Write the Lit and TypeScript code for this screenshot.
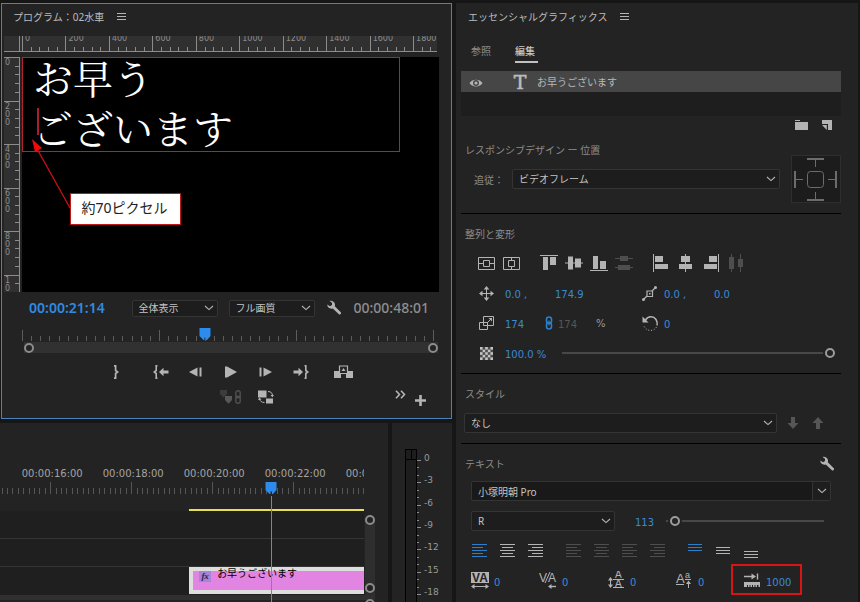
import { LitElement, html, css, svg, nothing, type TemplateResult } from "lit";
import { customElement, property } from "lit/decorators.js";

const range = (n: number) => Array.from({ length: n }, (_, i) => i);

/* Inline icon drawn in its own pixel box */
const icon = (w: number, h: number, body: unknown) =>
  html`<svg class="icon" width=${w} height=${h} viewBox="0 0 ${w} ${h}" aria-hidden="true">${body}</svg>`;

const chevron = () =>
  html`<svg class="chevron" width="10" height="6" viewBox="0 0 10 6" aria-hidden="true">
    <path d="M1 1 L5 4.6 L9 1" fill="none" stroke="#b4b4b4" stroke-width="1.1" />
  </svg>`;

const menuIcon = () =>
  icon(9, 9, svg`<path d="M0 1.5H9M0 4.5H9M0 7.5H9" stroke="#b4b4b4" />`);

const wrench = () =>
  icon(16, 16, svg`<path fill="#b4b4b4" d="M1.2 4.6 L4 6.2 L6 5 L6 2.8 L3.6 1 C6 0.4 8.6 1.8 9 4.2 C9.1 5 9 5.6 8.8 6.2 L15 12.4 C15.4 13.4 14.2 14.8 13.2 14.6 L6.8 8.4 C4.2 9.4 1.2 7.6 1.2 4.6 Z" />`);

const shared = css`
  * { box-sizing: border-box; }
  .icon { display: block; flex: none; }
  button, select, input { font: inherit; color: inherit; margin: 0; }
  button {
    background: none; border: 0; padding: 0;
    display: flex; align-items: center; justify-content: center;
  }
  .panel-title {
    display: flex; align-items: center; gap: 13px;
    margin: 0; font-size: 10px; font-weight: 400; color: #bcbcbc;
  }
  .drop { position: relative; display: block; min-width: 0; }
  .drop select {
    appearance: none; width: 100%; height: 20px; padding: 0 20px 0 6px;
    background: #1d1d1d; border: 1px solid #343434; border-radius: 2px;
    color: #c4c4c4; font-size: 10px; line-height: 16px; display: block;
  }
  .drop .chevron { position: absolute; right: 4px; top: calc(50% - 3px); pointer-events: none; }
  .sr { position: absolute; width: 1px; height: 1px; overflow: hidden; clip-path: inset(50%); }
`;

/* ---------------------------------------------------------------- program */

@customElement("program-monitor")
export class ProgramMonitor extends LitElement {
  static styles = [
    shared,
    css`
      :host { display: block; background: #232323; border: 1px solid #4a82bb; margin-left: 1px; padding-bottom: 9px; }
      .panel-title { height: 32px; padding: 0 11px 7px; }
      .stage {
        display: grid; grid-template-columns: 18px minmax(0, 1fr); grid-template-rows: 21px auto;
        margin: 0 12px 0 2px;
      }
      .corner { width: 16px; height: 16px; background: #303030; border-bottom: 1px solid #8c8c8c; border-right: 1px solid #8c8c8c; }
      .corner-wrap { background: linear-gradient(#303030 0 15px, #8c8c8c 15px 16px, transparent 16px); }
      .ruler-x { display: block; width: 100%; height: 16px; padding-right: 2px; }
      .ruler-x svg { display: block; width: 100%; height: 16px; background: #303030; border-bottom: 1px solid #8c8c8c; overflow: hidden; }
      .ruler-y { display: flex; flex-direction: column; width: 16px; background: #303030; border-right: 1px solid #8c8c8c; }
      .ruler-y svg { flex: 1; width: 15px; height: 0; min-height: 0; display: block; overflow: hidden; }
      .tick { stroke: #8c8c8c; shape-rendering: crispEdges; }
      .num { fill: #8c8c8c; font: 8px "DejaVu Sans", sans-serif; }
      .video { position: relative; aspect-ratio: 417 / 235; background: #000; overflow: hidden; }
      .caption {
        position: absolute; left: 0; top: 0; width: 378px; max-width: 91%; height: 95px;
        border: 1px solid #b3242a; color: #fff; margin: 0; padding: 0 0 0 10px; overflow: hidden;
        font: 400 40px/50px "Kozuka Mincho Pro", "Noto Serif CJK JP", "Noto Sans CJK JP", serif;
        white-space: pre;
      }
      .caption span { display: block; margin-top: -6px; }
      .note-lines { position: absolute; left: 0; top: 0; width: 60px; height: 170px; }
      .note {
        position: absolute; left: 48px; top: 136px; height: 32px; width: 111px;
        background: #fff; border: 1px solid #c01818; color: #222;
        font-size: 14px; line-height: 27px; text-align: center; margin: 0; padding-right: 2px; white-space: nowrap;
      }
      .info { display: flex; align-items: center; height: 32px; padding: 0 22px 0 27px; }
      .time { font-size: 14px; font-weight: 600; line-height: 20px; white-space: nowrap; }
      .now { color: #2f8be0; flex: 1; }
      .total { color: #8e8e8e; font-weight: 500; margin-left: 12px; }
      .info .drop { width: 86px; margin-right: 11px; }
      .info .drop select { height: 17px; line-height: 13px; }
      .scrub { position: relative; margin: 6px 18px 0 20px; height: 12px; }
      .scrub svg.marks { display: block; width: 100%; height: 11px; overflow: visible; }
      .head { position: absolute; top: -2px; margin-left: -6px; }
      .zoombar { display: flex; justify-content: space-between; align-items: center; height: 11px; margin: 0 13px 0 22px; background: #313132; }
      .knob { width: 10px; height: 10px; border: 2px solid #8c8c8c; border-radius: 50%; background: #232323; }
      .transport { display: flex; height: 26px; margin: 6px 0 0 96px; }
      .transport button { width: 35px; height: 26px; }
      .transport .first { margin-right: 10px; }
      .transport .last { margin-left: 8px; }
      .extras { display: flex; height: 24px; padding: 0 25px 0 216px; gap: 8px; }
      .extras button { width: 26px; height: 24px; }
      .extras .more { width: 12px; margin-left: auto; padding-bottom: 6px; }
      .extras .add { width: 12px; padding-top: 6px; }
    `,
  ];

  private rulerX() {
    return html`<div class="ruler-x"><svg aria-hidden="true">
      ${range(49).map((i) => svg`<line class="tick" x1=${(i * 4000) / 1910 + "%"} x2=${(i * 4000) / 1910 + "%"}
        y1=${i % 5 ? 11 : 0} y2="16" transform="translate(.5 0)" />`)}
      ${range(10).map((i) => svg`<text class="num" x=${(i * 20000) / 1910 + "%"} y="5" dx="3">${i * 200}</text>`)}
    </svg></div>`;
  }

  private rulerY() {
    return html`<div class="ruler-y"><svg aria-hidden="true">
      ${range(28).map((i) => svg`<line class="tick" y1=${(i * 4000) / 1080 + "%"} y2=${(i * 4000) / 1080 + "%"}
        x1=${i % 5 ? 11 : 0} x2="16" transform="translate(0 .5)" />`)}
      ${range(6).map((i) => String(i * 200).split("").map((d, k) => svg`<text class="num" x="1"
        y=${(i * 20000) / 1080 + "%"} dy=${8 + k * 8}>${d}</text>`))}
    </svg></div>`;
  }

  render() {
    const c = "#b4b4b4";
    const headAt = 44.6;
    return html`
      <h2 class="panel-title">プログラム：02水車 ${menuIcon()}</h2>
      <div class="stage">
        <div class="corner-wrap"><div class="corner"></div></div>
        ${this.rulerX()}
        ${this.rulerY()}
        <div class="video">
          <p class="caption"><span>お早う
ございます</span></p>
          <svg class="note-lines" viewBox="0 0 60 170" aria-hidden="true">
            <path d="M16 51V78" stroke="#a8202a" stroke-width="2" />
            <path d="M48 151L14 90" stroke="#c81010" stroke-width="1.4" />
            <path d="M10 82L20 91L13 95Z" fill="#f40808" />
          </svg>
          <p class="note">約70ピクセル</p>
        </div>
      </div>

      <div class="info">
        <span class="time now">00:00:21:14</span>
        <label class="drop"><span class="sr">表示倍率</span>
          <select><option>全体表示</option></select>${chevron()}</label>
        <label class="drop"><span class="sr">再生時の解像度</span>
          <select><option>フル画質</option></select>${chevron()}</label>
        <button aria-label="設定">${wrench()}</button>
        <span class="time total">00:00:48:01</span>
      </div>

      <div class="scrub">
        <svg class="marks" aria-hidden="true">
          ${range(46).map((i) => svg`<line x1=${(i * 100) / 45 + "%"} x2=${(i * 100) / 45 + "%"}
            y1=${i % 15 ? 6 : 0} y2="11" stroke="#5c5c5c" shape-rendering="crispEdges" transform="translate(.5 0)" />`)}
        </svg>
        <div class="head" style="left:${headAt}%">
          ${icon(12, 12, svg`<path d="M.5 0H11.500V8L8 12H7V9.500H5.500V12H4.500L.5 8Z" fill="#2d8ceb" />`)}
        </div>
      </div>
      <div class="zoombar"><span class="knob"></span><span class="knob"></span></div>

      <div class="transport">
        <button class="first" aria-label="アウトをマーク">
          ${icon(6, 14, svg`<path d="M1 .8H2.600V5.500L4.600 7L2.600 8.500V13.200H1" fill="none" stroke=${c} stroke-width="1.700" />`)}
        </button>
        <button aria-label="インへ移動">
          ${icon(16, 14, svg`<path d="M4.500 .8H3.200V5.500L1.200 7L3.200 8.500V13.200H4.500" fill="none" stroke=${c} stroke-width="1.600" />
            <path d="M6 7L10.500 2.800V5.600H15.500V8.400H10.500V11.200Z" fill=${c} />`)}
        </button>
        <button aria-label="前のフレーム">
          ${icon(13, 10, svg`<path d="M0 5L8.500 .5V9.500ZM10.500 .5H12.500V9.500H10.500Z" fill=${c} />`)}
        </button>
        <button aria-label="再生">
          ${icon(12, 12, svg`<path d="M0 .5H2L12 6L2 11.500H0Z" fill=${c} />`)}
        </button>
        <button aria-label="次のフレーム">
          ${icon(13, 10, svg`<path d="M13 5L4.500 .5V9.500ZM.5 .5H2.500V9.500H.5Z" fill=${c} />`)}
        </button>
        <button aria-label="アウトへ移動">
          ${icon(16, 14, svg`<path d="M11.500 .8H12.800V5.500L14.800 7L12.800 8.500V13.200H11.500" fill="none" stroke=${c} stroke-width="1.600" />
            <path d="M10 7L5.500 2.800V5.600H.5V8.400H5.500V11.200Z" fill=${c} />`)}
        </button>
        <button class="last" aria-label="リフト">
          ${icon(19, 14, svg`<path d="M0 6H7V13H0ZM12 6H19V13H12Z" fill=${c} />
            <path d="M5.500 1H13.500V8.500H5.500Z" fill="#232323" stroke=${c} stroke-width="1.200" />
            <path d="M7.500 6L9.500 3L11.500 6Z" fill=${c} />`)}
        </button>
      </div>

      <div class="extras">
        <button disabled aria-label="リンクされたマーカー">
          ${icon(22, 14, svg`<path d="M0 0H7V4L3.500 7.500L0 4Z" fill="#3c3c3c" /><path d="M5 6H12V10L8.500 13.800L5 10Z" fill="#585858" />
            <rect x="15.800" y=".8" width="4.400" height="7" rx="2.200" fill="none" stroke="#505050" stroke-width="1.400" />
            <rect x="15.800" y="6.200" width="4.400" height="7" rx="2.200" fill="none" stroke="#505050" stroke-width="1.400" />`)}
        </button>
        <button aria-label="プロキシの切り替え">
          ${icon(17, 14, svg`<path d="M1 .5H9.500V7.500H1ZM9 8.500H16V13.500H9Z" fill=${c} />
            <path d="M11 1.500C14 1.500 15.500 3 15.500 6M7.500 12.500C4.500 12.500 3 11 2.500 9" fill="none" stroke=${c} />
            <path d="M13.500 5H17L15.300 7.200ZM.8 9.800L2.500 7.500L4.500 9.800Z" fill=${c} />`)}
        </button>
        <button class="more" aria-label="その他">
          ${icon(11, 9, svg`<path d="M1 .7L4.500 4.500L1 8.300M6 .7L9.500 4.500L6 8.300" fill="none" stroke=${c} stroke-width="1.600" />`)}
        </button>
        <button class="add" aria-label="ボタンエディター">
          ${icon(11, 11, svg`<path d="M5.500 0V11M0 5.500H11" stroke=${c} stroke-width="2.600" />`)}
        </button>
      </div>
    `;
  }
}

/* --------------------------------------------------------------- timeline */

@customElement("timeline-panel")
export class TimelinePanel extends LitElement {
  static styles = [
    shared,
    css`
      :host {
        display: grid; grid-template-columns: minmax(0, 1fr) 10px; column-gap: 1px;
        padding-right: 13px; background: #232323; overflow: hidden;
      }
      .lanes { position: relative; }
      .scale { display: block; width: 100%; height: 86px; overflow: hidden; }
      .scale text { font: 10px "DejaVu Sans", sans-serif; fill: #a4a4a4; text-anchor: middle; }
      .track { height: 28px; background: #1f1f1f; border-bottom: 1px solid #353535; }
      .yellow { height: 2px; background: #e4de58; }
      .track.clip-track { border: 0; }
      .clip {
        display: flex; align-items: flex-start; gap: 6px; height: 27px; padding: 0 0 0 6px;
        border: 4px solid #dedede; border-right: 0; background: #e284e2; color: #000;
        font-size: 10px; line-height: 12px; white-space: nowrap;
      }
      .clip .fx {
        width: 12px; height: 11px; background: #a585d6; color: #2c2058; text-align: center;
        font: italic 700 9px/10px "Liberation Serif", serif;
      }
      .clip .name { margin-top: -4px; }
      .play { position: absolute; top: 59px; bottom: -12px; width: 12px; margin-left: -6px; display: flex; flex-direction: column; align-items: center; }
      .play::after { content: ""; width: 1px; flex: 1; background: #3f95e6; margin-top: 2px; }
      .bar { grid-column: 1 / -1; height: 5px; background: #303030; margin-bottom: 2px; }
      .vscroll { display: flex; flex-direction: column; justify-content: space-between; align-items: center; background: #2e2e2e; margin-top: 92px; padding: 0 0 2px; border-radius: 5px 5px 0 0; }
      .knob { width: 10px; height: 10px; border: 2px solid #8c8c8c; border-radius: 50%; background: #232323; }
      .foot { grid-column: 1 / -1; height: 12px; border-top: 1px solid #161616; display: flex; justify-content: flex-end; }
      .foot .knob { margin-top: -4px; }
    `,
  ];

  private pos(seconds: number) {
    return 13.8 + ((seconds - 16) / 2) * 22.25;
  }

  render() {
    const start = this.pos(19.43);
    return html`
      <div class="lanes">
        <svg class="scale" aria-hidden="true">
          ${range(75).map((i) => {
            const x = this.pos(14) + (i * 22.25) / 15 + "%";
            return svg`<line x1=${x} x2=${x} y1=${i % 15 ? 65 : 59} y2="71" stroke="#565656" shape-rendering="crispEdges" transform="translate(.5 0)" />`;
          })}
          ${[16, 18, 20, 22, 24].map((t) => svg`<text x=${this.pos(t) + "%"} dx="2" y="54">00:00:${t}:00</text>`)}
        </svg>
        <div class="yellow" style="margin-left:${start}%"></div>
        <div class="track"></div>
        <div class="track"></div>
        <div class="track clip-track">
          <div class="clip" style="margin-left:${start}%">
            <span class="fx">fx</span><span class="name">お早うございます</span>
          </div>
        </div>
        <div class="play" style="left:${this.pos(21.46)}%">
          ${icon(12, 12, svg`<path d="M.5 0H11.500V8L8 12H7V9.500H5.500V12H4.500L.5 8Z" fill="#2d8ceb" />`)}
        </div>
      </div>
      <div class="vscroll"><span class="knob"></span><span class="knob"></span></div>
      <div class="bar"></div>
      <div class="foot"><span class="knob"></span></div>
    `;
  }
}

@customElement("audio-meter")
export class AudioMeter extends LitElement {
  static styles = [
    shared,
    css`
      :host { display: flex; background: #232323; padding: 26px 0 0 13px; overflow: hidden; }
      .well { width: 13px; border: 1px solid #000; border-bottom: 0; background: #1d1d1d; }
      .peak { height: 10px; border-bottom: 1px solid #000; background: linear-gradient(90deg, transparent 5px, #000 5px 6px, transparent 6px); }
      svg { display: block; width: 40px; height: 160px; }
      text { font: 9px "DejaVu Sans", sans-serif; fill: #9a9a9a; }
    `,
  ];

  render() {
    return html`
      <div class="well"><div class="peak"></div></div>
      <svg aria-hidden="true">
        ${range(20).map((i) => svg`<path d="M0 ${Math.round(11 + i * 7.45) + 0.5}H${i % 3 ? 2 : 4}" stroke="#8c8c8c" />`)}
        ${range(7).map((i) => svg`<text x="7" y=${Math.round(12 + i * 22.35)}>${i ? -3 * i : 0}</text>`)}
      </svg>
    `;
  }
}

/* ----------------------------------------------------- essential graphics */

@customElement("scrub-value")
export class ScrubValue extends LitElement {
  @property() value = "";
  @property() label = "";
  @property({ type: Boolean }) dim = false;

  static styles = [
    shared,
    css`
      :host { display: block; min-width: 0; }
      input {
        display: block; width: 100%; height: 20px; padding: 2px 0 0; border: 0; background: none;
        color: #3a8ad6; font: 10px/18px "DejaVu Sans", sans-serif; outline: none;
      }
      .dim { color: #565656; }
    `,
  ];

  render() {
    return html`<input class=${this.dim ? "dim" : "live"} .value=${this.value} aria-label=${this.label} ?disabled=${this.dim} />`;
  }
}

@customElement("essential-graphics")
export class EssentialGraphics extends LitElement {
  static styles = [
    shared,
    css`
      :host { display: block; background: #232323; padding: 0 17px 0 5px; overflow: hidden; }
      .panel-title { height: 28px; padding: 0 0 1px 7px; gap: 12px; }
      .tabs { display: flex; gap: 21px; margin: 10px 0 8px 10px; }
      .tabs button { height: 22px; border-bottom: 2px solid transparent; color: #8e8e8e; font-size: 10px; width: 23px; justify-content: flex-start; padding-bottom: 1px; }
      .tabs .on { color: #c8c8c8; border-color: #c0c0c0; font-weight: 500; }
      .layers { background: #1e1e1e; height: 45px; }
      .layer { display: flex; align-items: center; height: 21px; background: #464646; color: #b8b8b8; font-size: 10px; padding-left: 8px; }
      .layer .type { margin: 0 9px 0 29px; }
      .tools { display: flex; justify-content: flex-end; gap: 4px; height: 19px; padding-right: 4px; }
      .tools button { width: 21px; height: 18px; }
      h3 { margin: 0; height: 20px; line-height: 20px; font-size: 10px; font-weight: 400; color: #8c8c8c; padding-left: 4px; }
      section { border-top: 1px solid #000; padding-top: 10px; }
      .responsive { border: 0; padding: 0 0 10px; margin-top: 5px; display: grid; grid-template-columns: minmax(0, 1fr) 50px; grid-template-rows: 20px 38px 5px; column-gap: 11px; }
      .follow { display: flex; align-items: center; gap: 8px; padding-left: 13px; font-size: 10px; color: #8c8c8c; }
      .follow .drop { flex: 1; }
      .pins { grid-column: 2; grid-row: 1 / 4; align-self: end; }
      .row { display: flex; align-items: center; height: 30px; padding-left: 13px; font-size: 10px; color: #9a9a9a; }
      .row .unit { font-family: "DejaVu Sans", sans-serif; }
      .transform { padding-bottom: 5px; }
      .transform h3 { margin-bottom: 4px; }
      .group { display: flex; margin-right: 12px; }
      .group button { width: 25px; height: 24px; }
      .pair { display: grid; grid-template-columns: 31px 50px 83px 26px 50px minmax(0, 1fr); }
      .scale { display: grid; grid-template-columns: 31px 37px 16px 38px 42px 26px minmax(0, 1fr); }
      .cell { width: 24px; display: flex; justify-content: center; }
      .fade { display: grid; grid-template-columns: 31px 57px minmax(0, 1fr); padding-right: 6px; }
      input[type="range"] {
        appearance: none; background: none; display: block; width: 100%; min-width: 0; height: 16px; padding: 0;
      }
      input[type="range"]::-webkit-slider-runnable-track { height: 2px; background: #484848; }
      input[type="range"]::-webkit-slider-thumb {
        appearance: none; width: 10px; height: 10px; margin-top: -4px; border-radius: 50%;
        border: 2px solid #9c9c9c; background: #232323; box-shadow: 0 0 0 2px #232323;
      }
      .style { padding-bottom: 10px; }
      .style-row { display: flex; align-items: center; margin-top: 9px; padding: 0 11px 0 3px; }
      .style-row .drop { flex: 1; margin-right: 3px; }
      .style-row button { width: 25px; height: 20px; }
      .text-head { display: flex; justify-content: space-between; align-items: center; padding-right: 6px; }
      .combo { display: flex; height: 20px; margin: 7px 10px 0; background: #191919; border: 1px solid #343434; border-radius: 2px; }
      .combo input { flex: 1; min-width: 0; background: none; border: 0; padding: 0 6px; font-size: 10px; color: #c4c4c4; }
      .combo button { width: 18px; border-left: 1px solid #343434; background: #1e1e1e; }
      .size { display: flex; align-items: center; margin: 10px 17px 0 10px; }
      .size .drop { width: 144px; margin-right: 20px; }
      .size scrub-value { width: 31px; }
      .size input { flex: 1; }
      .aligns { display: flex; gap: 10px; height: 20px; margin: 10px 0 0 5px; }
      .aligns div { display: flex; }
      .aligns button { width: 28px; height: 20px; }
      .metrics { display: grid; grid-template-columns: repeat(4, 68px) minmax(0, 60px); margin: 10px 0 0 10px; }
      .metric { position: relative; display: grid; grid-template-columns: 23px minmax(0, 1fr); align-items: center; height: 20px; }
      .marked::after { content: ""; position: absolute; inset: -7px 1px -4px -12px; border: 2px solid #d81414; pointer-events: none; }
      svg text { font-family: "Liberation Sans", sans-serif; }
      svg .slab { font-family: "DejaVu Serif", serif; }
    `,
  ];

  private lines(ys: number[][], color: string) {
    return icon(16, 20, ys.map(([y, a, b]) => svg`<path d="M${a} ${y + 0.5}H${b}" stroke=${color} />`));
  }

  private paragraph(kind: "left" | "center" | "right", color: string) {
    return this.lines(range(5).map((i) => {
      const w = i % 2 ? 11 : 15;
      const a = kind === "left" ? 0 : kind === "right" ? 15 - w : (15 - w) / 2;
      return [3 + i * 3, a, a + w];
    }), color);
  }

  private btn(label: string, body: TemplateResult, disabled = false) {
    return html`<button aria-label=${label} ?disabled=${disabled}>${body}</button>`;
  }

  private metric(label: string, value: string, body: TemplateResult, marked = false) {
    return html`<div class="metric ${marked ? "marked" : ""}">${body}
      <scrub-value label=${label} value=${value}></scrub-value></div>`;
  }

  render() {
    const c = "#b4b4b4";
    const d = "#4e4e4e";
    const b = "#2d7fcc";
    return html`
      <h2 class="panel-title">エッセンシャルグラフィックス ${menuIcon()}</h2>
      <div class="tabs"><button>参照</button><button class="on">編集</button></div>

      <div class="layers">
        <div class="layer">
          ${this.btn("表示", icon(14, 14, svg`<path d="M.5 8C3 3.500 11 3.500 13.500 8C11 12.500 3 12.500 .5 8Z" fill=${c} /><circle cx="7" cy="8" r="3" fill="#464646" /><circle cx="7" cy="8" r="1.600" fill=${c} />`))}
          <span class="type">${icon(16, 18, svg`<text class="slab" x="8" y="16" text-anchor="middle" font-size="19" fill="#bcbcbc" stroke="#bcbcbc" stroke-width=".6">T</text>`)}</span>
          <span>お早うございます</span>
        </div>
      </div>
      <div class="tools">
        ${this.btn("グループ", icon(13, 10, svg`<path d="M0 0H5V1H0ZM0 2H13V10H0Z" fill=${c} />`))}
        ${this.btn("新規レイヤー", icon(10, 10, svg`<path d="M0 0H10V10H6V4H0Z M0 5H4.800V10Z" fill=${c} />`))}
      </div>

      <section class="responsive">
        <h3>レスポンシブデザイン ー 位置</h3>
        <div class="follow"><label for="follow">追従：</label>
          <span class="drop"><select id="follow"><option>ビデオフレーム</option></select>${chevron()}</span></div>
        <div class="pins">
          ${icon(50, 48, svg`<rect x=".5" y=".5" width="49" height="47" fill="#1c1c1c" stroke="#2e2e2e" />
            <rect x="16.500" y="16.500" width="16" height="16" rx="3" fill="none" stroke="#6c6c6c" />
            <path d="M16 4H33M16 45H33M4 16V33M45 16V33" stroke="#6c6c6c" stroke-width="2" />
            <path d="M24.500 4V12M24.500 37V45M4 24.500H12M37 24.500H45" stroke="#6c6c6c" />`)}
        </div>
      </section>

      <section class="transform">
        <h3>整列と変形</h3>
        <div class="row">
          <div class="group">
            ${this.btn("垂直方向中央", icon(17, 13, svg`<path d="M.5 .5H16.500V12.500H.5ZM.5 6.500H5.500M11.500 6.500H16.500M5.500 3.500H11.500V9.500H5.500Z" fill="none" stroke=${c} />`))}
            ${this.btn("水平方向中央", icon(17, 13, svg`<path d="M.5 .5H16.500V12.500H.5ZM8.500 .5V3.500M8.500 9.500V12.500M5.500 3.500H11.500V9.500H5.500Z" fill="none" stroke=${c} />`))}
          </div>
          <div class="group">
            ${this.btn("上揃え", icon(18, 16, svg`<path d="M0 0H18V1H0ZM3 2H8V15H3ZM10 2H16V10H10Z" fill=${c} />`))}
            ${this.btn("垂直方向に整列", icon(18, 14, svg`<path d="M0 6.500H18V7.500H0ZM3 .5H8V13.500H3ZM10 2.500H16V11.500H10Z" fill=${c} />`))}
            ${this.btn("下揃え", icon(18, 16, svg`<path d="M0 15H18V16H0ZM3 1H8V14H3ZM10 6H16V14H10Z" fill=${c} />`))}
            ${this.btn("垂直方向に分布", icon(18, 14, svg`<path d="M0 2H18V3H0ZM0 11H18V12H0ZM5 0H13V5H5ZM3 9H15V14H3Z" fill=${d} />`), true)}
          </div>
          <div class="group">
            ${this.btn("左揃え", icon(16, 18, svg`<path d="M0 0H1V18H0ZM2 2H10V8H2ZM2 10H15V15H2Z" fill=${c} />`))}
            ${this.btn("水平方向に整列", icon(13, 18, svg`<path d="M6 0H7V18H6ZM2 2H11V8H2ZM0 10H13V15H0Z" fill=${c} />`))}
            ${this.btn("右揃え", icon(16, 18, svg`<path d="M15 0H16V18H15ZM6 2H14V8H6ZM1 10H14V15H1Z" fill=${c} />`))}
            ${this.btn("水平方向に分布", icon(14, 18, svg`<path d="M2 0H3V18H2ZM11 0H12V18H11ZM0 3H5V15H0ZM9 5H14V13H9Z" fill=${d} />`), true)}
          </div>
        </div>

        <div class="row pair">
          <span class="cell">${icon(15, 15, svg`<path d="M7.500 2V13M2 7.500H13" stroke=${c} />
            <path d="M7.500 0L10.300 3.500H4.700ZM7.500 15L10.300 11.500H4.700ZM0 7.500L3.500 4.700V10.300ZM15 7.500L11.500 4.700V10.300Z" fill=${c} />`)}</span>
          <scrub-value label="位置 X" value="0.0 ,"></scrub-value>
          <scrub-value label="位置 Y" value="174.9"></scrub-value>
          <span class="cell">${icon(16, 15, svg`<path d="M1 14L5 10M10 5L14 1" stroke=${c} stroke-width="1.200" />
            <path d="M5 5H10.500V10.500H5Z" fill="none" stroke=${c} stroke-width="1.200" /><circle cx="1.500" cy="13.500" r="1.500" fill=${c} /><circle cx="13.500" cy="1.500" r="1.500" fill=${c} /><path d="M7 7H8.600V8.600H7Z" fill=${c} />`)}</span>
          <scrub-value label="アンカー X" value="0.0 ,"></scrub-value>
          <scrub-value label="アンカー Y" value="0.0"></scrub-value>
        </div>

        <div class="row scale">
          <span class="cell">${icon(15, 14, svg`<path d="M4.500 .5H14.500V9.500H4.500ZM.5 6.500H8.500V13.500H.5Z" fill="none" stroke=${c} />
            <path d="M8 7L12 3" stroke=${c} /><path d="M9.500 2H13V5.500Z" fill=${c} />`)}</span>
          <scrub-value label="スケール" value="174"></scrub-value>
          <button aria-label="縦横比を固定">${icon(10, 14, svg`<rect x="1.500" y="1" width="5" height="6.500" rx="2.500" fill="none" stroke=${b} stroke-width="1.600" />
            <rect x="1.500" y="6.500" width="5" height="6.500" rx="2.500" fill="none" stroke=${b} stroke-width="1.600" /><path d="M4 4.500V9.500" stroke=${b} stroke-width="1.200" />`)}</button>
          <scrub-value label="スケール（高さ）" value="174" dim></scrub-value>
          <span class="unit">%</span>
          <span class="cell">${icon(17, 17, svg`<path d="M3.500 5C6 1 11.500 .8 14 4.500C15.300 6.500 15.400 8.500 15 10.500" fill="none" stroke=${c} stroke-width="1.500" />
            <path d="M.5 1.500V7.500H6.500Z" fill=${c} /><path d="M14.500 12C12 16.500 4.500 17 2 11" fill="none" stroke=${c} stroke-dasharray="1 1.800" />`)}</span>
          <scrub-value label="回転" value="0"></scrub-value>
        </div>

        <div class="row fade">
          <span class="cell">${icon(13, 13, svg`<rect width="13" height="13" fill="#4c4c4c" />
            ${range(25).map((i) => (i % 2 ? nothing : svg`<rect x=${(i % 5) * 2.6} y=${Math.floor(i / 5) * 2.6} width="2.600" height="2.600" fill="#c4c4c4" />`))}`)}</span>
          <scrub-value label="不透明度" value="100.0 %"></scrub-value>
          <input type="range" min="0" max="100" value="100" aria-label="不透明度スライダー" />
        </div>
      </section>

      <section class="style">
        <h3>スタイル</h3>
        <div class="style-row">
          <label class="drop"><span class="sr">スタイル</span><select><option>なし</option></select>${chevron()}</label>
          ${this.btn("プッシュ", icon(12, 12, svg`<path d="M4 0H8V6H11.500L6 12L.5 6H4Z" fill="#565656" />`))}
          ${this.btn("プル", icon(12, 12, svg`<path d="M4 12H8V6H11.500L6 0L.5 6H4Z" fill="#565656" />`))}
        </div>
      </section>

      <section>
        <div class="text-head"><h3>テキスト</h3>${this.btn("テキスト設定", wrench())}</div>
        <div class="combo"><input value="小塚明朝 Pro" aria-label="フォント" /><button aria-label="フォント一覧">${chevron()}</button></div>
        <div class="size">
          <label class="drop"><span class="sr">フォントスタイル</span><select><option>R</option></select>${chevron()}</label>
          <scrub-value label="フォントサイズ" value="113"></scrub-value>
          <input type="range" min="0" max="100" value="3" aria-label="フォントサイズスライダー" />
        </div>
        <div class="aligns">
          <div>
            ${this.btn("左揃え", this.paragraph("left", b))}
            ${this.btn("中央揃え", this.paragraph("center", c))}
            ${this.btn("右揃え", this.paragraph("right", c))}
          </div>
          <div>
            ${this.btn("両端揃え（左）", this.paragraph("left", d), true)}
            ${this.btn("両端揃え（中央）", this.paragraph("center", d), true)}
            ${this.btn("両端揃え", this.paragraph("left", d), true)}
            ${this.btn("両端揃え（右）", this.paragraph("right", d), true)}
          </div>
          <div>
            ${this.btn("上", this.lines([[3, 0, 14], [6, 0, 14], [9, 0, 14]], b))}
            ${this.btn("中央", this.lines([[6, 0, 14], [9, 0, 14], [12, 0, 14]], c))}
            ${this.btn("下", this.lines([[10, 0, 14], [13, 0, 14], [16, 0, 14]], c))}
          </div>
        </div>
        <div class="metrics">
          ${this.metric("トラッキング", "0", icon(18, 20, svg`<rect width="18" height="11" y="1" fill=${c} /><text x="9" y="11" text-anchor="middle" font-size="12" font-weight="700" fill="#232323">VA</text>
            <path d="M2 15.500H16" stroke=${c} /><path d="M0 15.500L3.500 13V18ZM18 15.500L14.500 13V18Z" fill=${c} />`))}
          ${this.metric("カーニング", "0", icon(18, 20, svg`<text x="0" y="11" font-size="12" fill=${c}>V</text><text x="9" y="11" font-size="12" fill=${c}>A</text>
            <path d="M6 12L11 1" stroke=${c} /><path d="M11 15.500H17" stroke=${c} stroke-width="1.400" /><path d="M9 15.500L12.500 13V18Z" fill=${c} />`))}
          ${this.metric("行間", "0", icon(18, 20, svg`<text x="8" y="7" font-size="10" fill=${c}>A</text><text x="8" y="16" font-size="10" fill=${c}>A</text>
            <path d="M6 8.500H17M6 16.500H17M3.500 9V15" stroke=${c} /><path d="M3.500 6L6 9.500H1ZM3.500 17L6 13.500H1Z" fill=${c} />`))}
          ${this.metric("ベースラインシフト", "0", icon(18, 20, svg`<text x="1" y="12" font-size="13" fill=${c}>A</text><text x="10" y="7" font-size="9" fill=${c}>a</text>
            <path d="M1 13.500H9M10 8.500H16M13.500 12V17" stroke=${c} /><path d="M13.500 9.500L16 13H11Z" fill=${c} />`))}
          ${this.metric("タブ幅", "1000", icon(18, 20, svg`<path d="M1 5.500H10M14.500 2.500V8.500" stroke=${c} stroke-width="1.400" /><path d="M8.500 2.500L13 5.500L8.500 8.500Z" fill=${c} />
            <path d="M1 11H17V16H15.500V14H14V16H12.500V14H11.500V16H10V14H9V16H7.500V14H6.500V16H5V14H4V16H1Z" fill=${c} />`), true)}
        </div>
      </section>
    `;
  }
}

/* --------------------------------------------------------------- workspace */

@customElement("app-root")
export class AppRoot extends LitElement {
  static styles = css`
    :host {
      display: grid; grid-template-columns: minmax(0, 456fr) minmax(0, 404fr);
      height: 100vh; overflow: hidden; box-sizing: border-box; padding-top: 3px; background: #161616;
      font-family: "Noto Sans", "Noto Sans CJK JP", sans-serif; font-size: 10px; color: #b8b8b8;
    }
    .left { display: grid; grid-template-rows: auto minmax(0, 1fr); row-gap: 4px; margin-right: 4px; min-height: 0; }
    .bottom { display: grid; grid-template-columns: minmax(0, 1fr) 60px; column-gap: 4px; min-height: 0; }
    essential-graphics { margin-right: 2px; min-height: 0; }
    timeline-panel, audio-meter { min-height: 0; }
  `;

  render() {
    return html`
      <div class="left">
        <program-monitor></program-monitor>
        <div class="bottom">
          <timeline-panel></timeline-panel>
          <audio-meter></audio-meter>
        </div>
      </div>
      <essential-graphics></essential-graphics>
    `;
  }
}
